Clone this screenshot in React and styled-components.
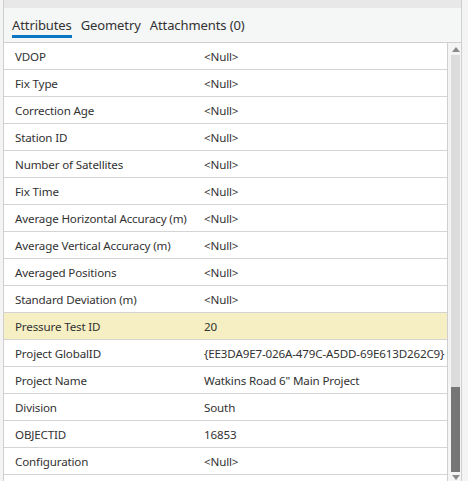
import React from "react";
import styled, { createGlobalStyle } from "styled-components";

const GlobalStyle = createGlobalStyle`
  html, body {
    margin: 0;
    padding: 0;
    background: #f4f4f4;
  }
  body {
    font-family: "Noto Sans", "Open Sans", sans-serif;
    color: #323232;
  }
`;

const Panel = styled.div`
  margin-left: 3px;
  width: 457px;
  height: 481px;
  border-left: 1px solid #cfcfcf;
  border-right: 1px solid #cfcfcf;
  display: flex;
  flex-direction: column;
  overflow: hidden;
`;

const TopStrip = styled.div`
  height: 8px;
  background: #e8e8e8;
`;

const TabBar = styled.div`
  height: 35px;
  box-sizing: border-box;
  background: #f5f6f6;
  display: flex;
  align-items: flex-start;
  gap: 9px;
  padding: 8px 0 0 8px;
  border-bottom: 1px solid #cfcfcf;
`;

const Tab = styled.div`
  font-size: 13px;
  line-height: 18px;
  letter-spacing: -0.1px;
  padding: 0 0 1px;
  color: #323232;
  border-bottom: 3px solid ${(p) => (p.$active ? "#0a77c4" : "transparent")};
  cursor: pointer;
`;

const Body = styled.div`
  flex: 1;
  display: flex;
  min-height: 0;
`;

const Table = styled.div`
  width: 445px;
  background: #ffffff;
  border-right: 1px solid #cfcfcf;
  overflow: hidden;
`;

const Row = styled.div`
  display: grid;
  grid-template-columns: 200px 1fr;
  height: 27px;
  box-sizing: border-box;
  padding-top: 1px;
  align-items: center;
  border-bottom: 1px solid #d4d4d4;
  background: ${(p) => (p.$highlight ? "#f5efc3" : "#ffffff")};
  font-size: 11.6px;
  letter-spacing: -0.15px;
  color: #323232;
`;

const Label = styled.span`
  padding-left: 11px;
  white-space: nowrap;
`;

const Value = styled.span`
  white-space: nowrap;
`;

const Scrollbar = styled.div`
  width: 13px;
  display: flex;
  flex-direction: column;
  align-items: center;
  padding: 3px 0 0 2px;
  box-sizing: border-box;
`;

const Arrow = styled.div`
  width: 0;
  height: 0;
  border-left: 4px solid transparent;
  border-right: 4px solid transparent;
  ${(p) =>
    p.$down
      ? "border-top: 5px solid #8a8a8a;"
      : "border-bottom: 5px solid #8a8a8a;"}
  margin: 1px 0;
`;

const Track = styled.div`
  flex: 1;
  width: 9px;
  margin: 2px 0;
  background: #dcdcdc;
  display: flex;
  flex-direction: column;
  justify-content: flex-end;
`;

const Thumb = styled.div`
  height: 85px;
  background: #767676;
`;

const rows = [
  ["VDOP", "<Null>"],
  ["Fix Type", "<Null>"],
  ["Correction Age", "<Null>"],
  ["Station ID", "<Null>"],
  ["Number of Satellites", "<Null>"],
  ["Fix Time", "<Null>"],
  ["Average Horizontal Accuracy (m)", "<Null>"],
  ["Average Vertical Accuracy (m)", "<Null>"],
  ["Averaged Positions", "<Null>"],
  ["Standard Deviation (m)", "<Null>"],
  ["Pressure Test ID", "20", true],
  ["Project GlobalID", "{EE3DA9E7-026A-479C-A5DD-69E613D262C9}"],
  ["Project Name", 'Watkins Road 6" Main Project'],
  ["Division", "South"],
  ["OBJECTID", "16853"],
  ["Configuration", "<Null>"],
];

export default function App() {
  return (
    <>
      <GlobalStyle />
      <Panel>
        <TopStrip />
        <TabBar>
          <Tab $active>Attributes</Tab>
          <Tab>Geometry</Tab>
          <Tab>Attachments (0)</Tab>
        </TabBar>
        <Body>
          <Table>
            {rows.map(([label, value, hl]) => (
              <Row key={label} $highlight={hl}>
                <Label>{label}</Label>
                <Value>{value}</Value>
              </Row>
            ))}
          </Table>
          <Scrollbar>
            <Arrow />
            <Track>
              <Thumb />
            </Track>
            <Arrow $down />
          </Scrollbar>
        </Body>
      </Panel>
    </>
  );
}
